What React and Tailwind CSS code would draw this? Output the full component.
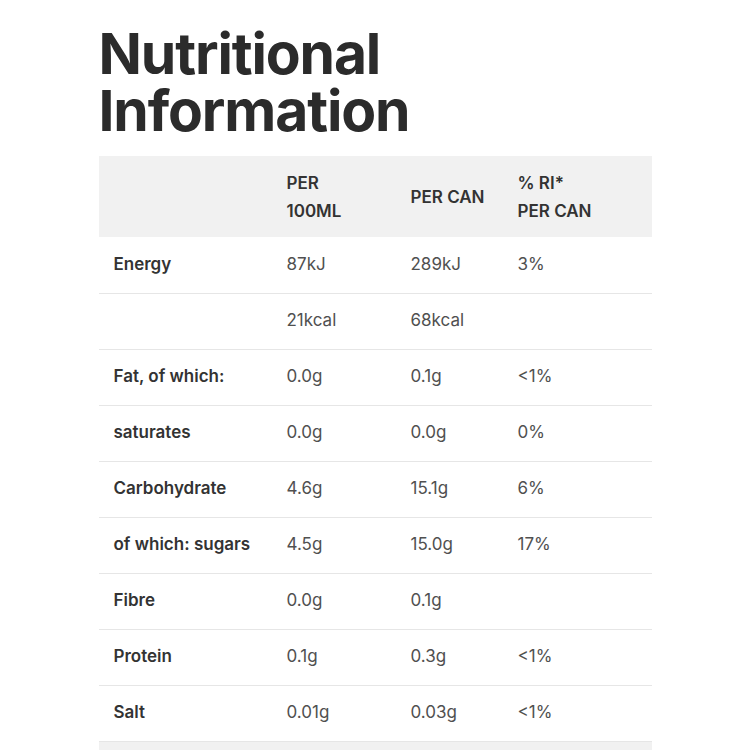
import React from "react";

const rows = [
    { label: "Energy", a: "87kJ", b: "289kJ", c: "3%" },
    { label: "", a: "21kcal", b: "68kcal", c: "" },
    { label: "Fat, of which:", a: "0.0g", b: "0.1g", c: "<1%" },
    { label: "saturates", a: "0.0g", b: "0.0g", c: "0%" },
    { label: "Carbohydrate", a: "4.6g", b: "15.1g", c: "6%" },
    { label: "of which: sugars", a: "4.5g", b: "15.0g", c: "17%" },
    { label: "Fibre", a: "0.0g", b: "0.1g", c: "" },
    { label: "Protein", a: "0.1g", b: "0.3g", c: "<1%" },
    { label: "Salt", a: "0.01g", b: "0.03g", c: "<1%" },
];

const App = () => {
    return (
        <div className="min-h-[750px] bg-white font-['Inter',sans-serif]">
            <div className="mx-auto w-[553px] pt-[25px]">
                <h1 className="text-[57px] font-bold leading-[57px] tracking-[-0.02em] text-[#2b2b2b]">
                    Nutritional
                    <br />
                    Information
                </h1>

                <table className="mt-[17px] w-full table-fixed border-collapse text-[17px] text-[#505050]">
                    <colgroup>
                        <col className="w-[173px]" />
                        <col className="w-[124px]" />
                        <col className="w-[107px]" />
                        <col />
                    </colgroup>
                    <thead>
                        <tr className="h-[81px] bg-[#f1f1f1] text-left uppercase leading-[28px] text-[#333]">
                            <th className="pl-[15px]"></th>
                            <th className="pl-[15px] font-semibold">Per<br />100ml</th>
                            <th className="pl-[15px] font-semibold">Per can</th>
                            <th className="pl-[15px] font-semibold">% RI*<br />Per can</th>
                        </tr>
                    </thead>
                    <tbody>
                        {rows.map((r, i) => (
                            <tr key={i} className="h-[56px] border-b border-[#e6e6e6]">
                                <td className="pl-[15px] font-semibold text-[#333]">{r.label}</td>
                                <td className="pl-[15px]">{r.a}</td>
                                <td className="pl-[15px]">{r.b}</td>
                                <td className="pl-[15px]">{r.c}</td>
                            </tr>
                        ))}
                        <tr className="h-[56px] bg-[#f1f1f1]">
                            <td colSpan={4}></td>
                        </tr>
                    </tbody>
                </table>
            </div>
        </div>
    );
};

export default App;
